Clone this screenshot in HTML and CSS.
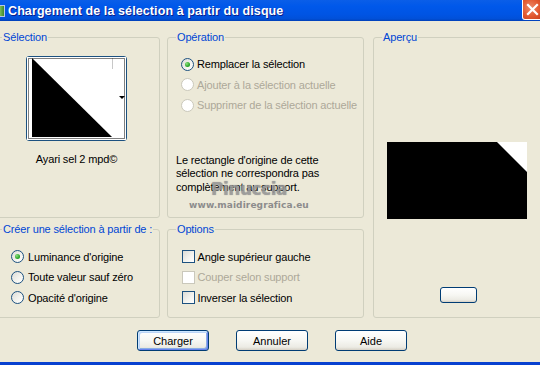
FILE: index.html
```html
<!DOCTYPE html>
<html lang="fr">
<head>
    <meta charset="UTF-8">
    <title>Chargement de la sélection à partir du disque</title>
    <link rel="stylesheet" href="styles.css">
</head>
<body>
    <div class="window">
        <div class="titlebar">
            <span class="app-icon"></span>
            <span class="title">Chargement de la sélection à partir du disque</span>
            <span class="close">
                <svg width="13" height="13" viewBox="0 0 13 13">
                    <path d="M2 2 L11 11 M11 2 L2 11" stroke="#fff" stroke-width="2.2" stroke-linecap="square"/>
                </svg>
            </span>
        </div>

        <div class="dialog">
            <div class="groups">
                <fieldset class="group group-selection">
                    <legend>Sélection</legend>
                    <div class="thumb">
                        <svg width="99" height="83" viewBox="0 0 99 83">
                            <rect width="99" height="83" fill="#fff"/>
                            <polygon points="5,1 85,80 5,80" fill="#000"/>
                            <line x1="85.5" y1="1" x2="85.5" y2="12" stroke="#c8c8c8"/>
                            <polygon points="92,39 98,39 95,42" fill="#000"/>
                            <rect x="1.5" y="1.5" width="96" height="80" fill="none" stroke="#000" stroke-dasharray="1 1"/>
                        </svg>
                    </div>
                    <div class="thumb-name">Ayari sel 2 mpd©</div>
                </fieldset>

                <fieldset class="group group-operation">
                    <legend>Opération</legend>
                    <div class="choices">
                        <div class="choice"><span class="radio checked"></span>Remplacer la sélection</div>
                        <div class="choice disabled"><span class="radio"></span>Ajouter à la sélection actuelle</div>
                        <div class="choice disabled"><span class="radio"></span>Supprimer de la sélection actuelle</div>
                    </div>
                    <p class="note">Le rectangle d'origine de cette<br>sélection ne correspondra pas<br>complètement au support.</p>
                    <div class="watermark">
                        <span class="wm-name">Pinuccia</span>
                        <span class="wm-url">www.maidiregrafica.eu</span>
                    </div>
                </fieldset>

                <fieldset class="group group-preview">
                    <legend>Aperçu</legend>
                    <div class="preview">
                        <svg width="140" height="77" viewBox="0 0 140 77">
                            <rect width="140" height="77" fill="#000"/>
                            <polygon points="110,0 140,0 140,30" fill="#fff"/>
                        </svg>
                    </div>
                    <button class="btn btn-small"></button>
                </fieldset>

                <fieldset class="group group-source">
                    <legend>Créer une sélection à partir de :</legend>
                    <div class="choices">
                        <div class="choice"><span class="radio checked"></span>Luminance d'origine</div>
                        <div class="choice"><span class="radio"></span>Toute valeur sauf zéro</div>
                        <div class="choice"><span class="radio"></span>Opacité d'origine</div>
                    </div>
                </fieldset>

                <fieldset class="group group-options">
                    <legend>Options</legend>
                    <div class="choices">
                        <div class="choice"><span class="check"></span>Angle supérieur gauche</div>
                        <div class="choice disabled"><span class="check"></span>Couper selon support</div>
                        <div class="choice"><span class="check"></span>Inverser la sélection</div>
                    </div>
                </fieldset>
            </div>

            <div class="actions">
                <button class="btn btn-default">Charger</button>
                <button class="btn">Annuler</button>
                <button class="btn">Aide</button>
            </div>
        </div>

        <div class="frame-bottom"></div>
    </div>
</body>
</html>
```

FILE: styles.css
```css
* {
    margin: 0;
    padding: 0;
    box-sizing: border-box;
}

body {
    width: 540px;
    height: 365px;
    overflow: hidden;
    background: #ece9d8;
    font-family: 'Liberation Sans', Arial, sans-serif;
    font-size: 11px;
    letter-spacing: -0.15px;
    color: #000;
}

.window {
    height: 365px;
    display: flex;
    flex-direction: column;
}

/* title bar */

.titlebar {
    height: 21px;
    display: flex;
    align-items: center;
    background: linear-gradient(to bottom, #0a5ee8 0%, #0058ea 30%, #0054e3 70%, #0150d8 90%, #003fb6 100%);
    color: #fff;
}

.app-icon {
    width: 16px;
    height: 12px;
    margin-left: -11px;
    margin-top: 1px;
    background: linear-gradient(to right, #dfe9d6, #7fbf5a 70%, #3d8a2c);
    border: 1px solid #b7c7e9;
}

.title {
    margin-left: 3px;
    font-weight: bold;
    font-size: 12.5px;
    letter-spacing: 0.1px;
    text-shadow: 1px 1px 0 #0a1e8c;
}

.close {
    margin-left: auto;
    margin-right: -3px;
    align-self: flex-start;
    width: 21px;
    height: 20px;
    display: flex;
    align-items: center;
    justify-content: center;
    background: radial-gradient(circle at 40% 40%, #ec8a6a 0%, #e2582f 55%, #c5401d 100%);
    border: 1px solid #fff;
    border-top: none;
    border-radius: 0 0 3px 3px;
}

/* dialog body */

.dialog {
    flex: 1;
    padding-top: 10px;
}

.groups {
    width: 557px;
    margin-left: -7px;
    display: grid;
    grid-template-columns: 167px 197px 1fr;
    grid-template-rows: 187px 95px;
    column-gap: 7px;
    row-gap: 5px;
}

.group {
    position: relative;
    min-width: 0;
    margin: 0;
    padding: 0;
    border: 1px solid #d0d0bf;
    border-radius: 3px;
}

.group legend {
    margin-left: 8px;
    padding: 0 1px;
    line-height: 13px;
    color: #0046d5;
}

.group-preview {
    grid-column: 3;
    grid-row: 1 / span 2;
    margin-left: 2px;
}

.group-source {
    grid-column: 1;
    grid-row: 2;
}

.group-options {
    grid-column: 2;
    grid-row: 2;
}

/* selection thumbnail */

.thumb {
    width: 101px;
    height: 85px;
    margin: 12px auto 0;
    border: 1px solid #1c5180;
    border-radius: 3px;
    background: #fff;
}

.thumb svg {
    display: block;
}

.thumb-name {
    margin-top: 12px;
    line-height: 13px;
    text-align: center;
}

/* radios and checkboxes */

.choices {
    padding: 10px 0 0 13px;
}

.group-source .choices {
    padding: 10.5px 0 0 17px;
}

.group-options .choices {
    padding: 10.5px 0 0 13.5px;
}

.choice {
    height: 20.5px;
    display: flex;
    align-items: center;
    white-space: nowrap;
}

.choice.disabled {
    color: #aca899;
}

.radio,
.check {
    width: 13px;
    height: 13px;
    margin-right: 3px;
    flex-shrink: 0;
    border: 1px solid #1c5180;
    background: linear-gradient(135deg, #dcdcd7 0%, #f4f4f0 60%, #fff 100%);
}

.group-source .radio {
    margin-right: 4px;
}

.radio {
    position: relative;
    border-radius: 50%;
}

.radio.checked::after {
    content: "";
    position: absolute;
    left: 3px;
    top: 3px;
    width: 5px;
    height: 5px;
    border-radius: 50%;
    background: radial-gradient(circle at 35% 35%, #8ee07e 0%, #2aa62a 60%, #1c8c1c 100%);
}

.disabled .radio,
.disabled .check {
    border-color: #cac8bb;
    background: #fff;
}

/* note and watermark */

.note {
    margin-top: 38px;
    padding-left: 8px;
    line-height: 13.5px;
}

.watermark {
    position: absolute;
    left: 20px;
    top: 137px;
    width: 122px;
    display: flex;
    flex-direction: column;
    align-items: center;
    line-height: 1;
    pointer-events: none;
}

.wm-name {
    font-family: 'DejaVu Sans', sans-serif;
    font-weight: bold;
    font-size: 17px;
    color: rgba(160, 160, 160, 0.8);
    letter-spacing: -0.5px;
    text-shadow: 0 0 1px rgba(90, 90, 90, 0.6);
}

.wm-url {
    margin-top: 3px;
    font-family: 'DejaVu Sans', sans-serif;
    font-weight: bold;
    font-size: 9px;
    color: #8c8c8c;
    letter-spacing: 0.1px;
}

/* preview */

.preview {
    margin: 98px 0 0 13px;
}

.preview svg {
    display: block;
}

/* buttons */

.btn {
    width: 72px;
    height: 21px;
    border: 1px solid #003c74;
    border-radius: 3px;
    background: linear-gradient(to bottom, #ffffff 0%, #f7f7f3 50%, #ecebe4 85%, #d6d0c5 100%);
    font-family: 'Liberation Sans', Arial, sans-serif;
    font-size: 11px;
    color: #000;
}

.btn-default {
    box-shadow: inset 1px 1px 0 #cee7ff, inset -1px -1px 0 #6982ee, inset 2px 2px 0 #bcd4f6, inset -2px -2px 0 #89ade4;
}

.btn-small {
    display: block;
    width: 37px;
    height: 16px;
    margin: 68px 0 0 66px;
}

.actions {
    margin-top: 12px;
    padding-left: 4px;
    display: flex;
    justify-content: center;
    gap: 27px;
}

.frame-bottom {
    height: 3px;
    background: #0841d0;
}
```
